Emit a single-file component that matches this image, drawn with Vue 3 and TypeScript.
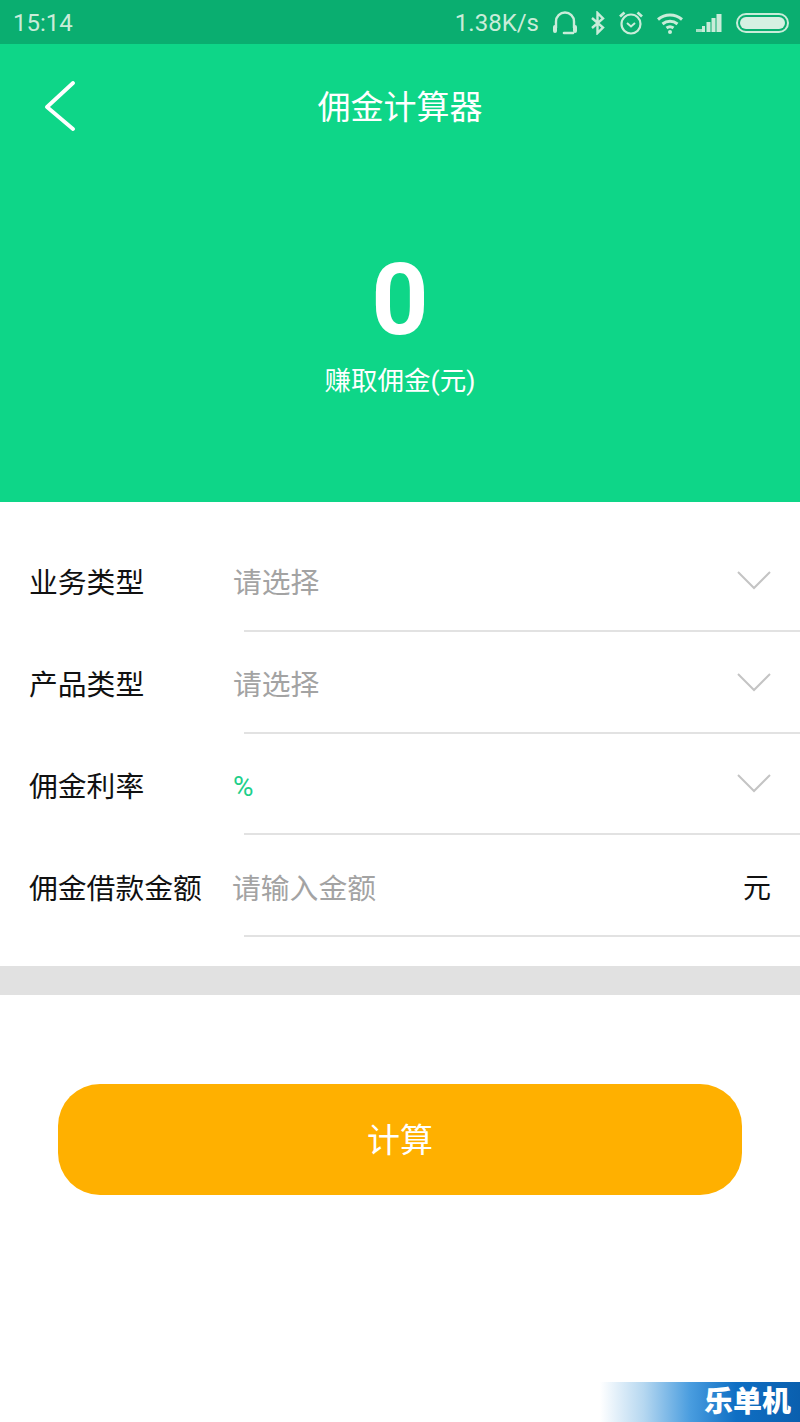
<script setup lang="ts">
interface FormRow {
  label: string
  value: string
  kind: 'select' | 'percent' | 'input'
}

const rows: FormRow[] = [
  { label: '业务类型', value: '请选择', kind: 'select' },
  { label: '产品类型', value: '请选择', kind: 'select' },
  { label: '佣金利率', value: '%', kind: 'percent' },
  { label: '佣金借款金额', value: '请输入金额', kind: 'input' },
]
</script>

<template>
  <div class="page">
    <div class="status-bar">
      <span class="clock">15:14</span>
      <div class="status-right">
        <span class="speed">1.38K/s</span>
        <svg class="ic-headset" width="26" height="24" viewBox="0 0 26 24" fill="none" stroke="#c9ecd9" stroke-width="2.4">
          <path d="M4 17V10.500a9 9 0 0 1 18 0V17" />
          <path d="M3 16v4M23 16v4" stroke-linecap="round" stroke-width="4" />
          <path d="M12 22h9" stroke-linecap="round" stroke-width="2.600" />
        </svg>
        <svg class="ic-bt" width="16" height="24" viewBox="0 0 16 24" fill="none" stroke="#c9ecd9" stroke-width="2.400">
          <path d="M2 7l11 9.500L7.500 22V2L13 7.500 2 17" />
        </svg>
        <svg class="ic-alarm" width="26" height="26" viewBox="0 0 26 26" fill="none" stroke="#c9ecd9" stroke-width="2.200">
          <circle cx="13" cy="14" r="9.500" />
          <path d="M9 13l4 3.500 4-3.500" stroke-width="2" />
          <path d="M2 6.500L6.500 2.500M24 6.500L19.500 2.500" stroke-width="2.800" />
        </svg>
        <svg class="ic-wifi" width="28" height="22" viewBox="0 0 28 22" fill="none" stroke="#c9ecd9" stroke-width="3">
          <path d="M2 7.500c7-6 17-6 24 0" />
          <path d="M6.500 12c4.500-3.800 10.500-3.800 15 0" />
          <path d="M10.500 16c2-1.500 5-1.500 7 0" />
          <circle cx="14" cy="20" r="2" fill="#c9ecd9" stroke="none" />
        </svg>
        <svg class="ic-signal" width="28" height="20" viewBox="0 0 28 20" fill="#c9ecd9">
          <rect x="0" y="16" width="9" height="3" opacity="0.8" />
          <rect x="6" y="13" width="3" height="6" />
          <rect x="10.500" y="9" width="4" height="10" />
          <rect x="15.500" y="5" width="4" height="14" />
          <rect x="20.500" y="1" width="5" height="18" />
        </svg>
        <div class="battery"><div class="battery-fill"></div></div>
      </div>
    </div>

    <header class="hero">
      <div class="nav">
        <svg class="back" width="34" height="52" viewBox="0 0 34 52" fill="none" stroke="#fff" stroke-width="3.800" stroke-linecap="round" stroke-linejoin="round">
          <path d="M31 2L5 26l26 22" />
        </svg>
        <h1 class="title">佣金计算器</h1>
      </div>
      <div class="amount">0</div>
      <div class="amount-label">赚取佣金(元)</div>
    </header>

    <section class="form">
      <div v-for="row in rows" :key="row.label" class="row">
        <span class="label">{{ row.label }}</span>
        <span class="value" :class="`value-${row.kind}`">{{ row.value }}</span>
        <span v-if="row.kind === 'input'" class="unit">元</span>
        <svg v-else class="chevron" width="36" height="20" viewBox="0 0 36 20" fill="none" stroke="#c4c4c4" stroke-width="2">
          <path d="M2 1l16 16L34 1" />
        </svg>
      </div>
    </section>

    <div class="divider"></div>

    <div class="action">
      <button class="calc-btn" type="button">计算</button>
    </div>

    <div class="watermark"><span>乐单机</span></div>
  </div>
</template>

<style scoped>
.page {
  position: relative;
  width: 800px;
  height: 1422px;
  overflow: hidden;
  background: #fff;
  font-family: 'Roboto', 'Noto Sans CJK SC', sans-serif;
}
.status-bar {
  height: 44px;
  background: #0aae70;
  color: #c9ecd9;
  display: flex;
  align-items: center;
  justify-content: space-between;
  padding: 2px 11px 0 13px;
  box-sizing: border-box;
}
.clock {
  font-size: 24px;
}
.speed {
  font-size: 24px;
  margin-right: 1px;
}
.status-right {
  display: flex;
  align-items: center;
  gap: 12px;
}
.battery {
  width: 53px;
  height: 20px;
  border: 2px solid #c9ecd9;
  border-radius: 10px;
  box-sizing: border-box;
  padding: 2px;
}
.battery-fill {
  height: 100%;
  background: #d6f0e2;
  border-radius: 6px;
}
.hero {
  height: 458px;
  background: #0ed688;
  color: #fff;
  display: flex;
  flex-direction: column;
  align-items: center;
}
.nav {
  position: relative;
  width: 100%;
  height: 126px;
  display: flex;
  justify-content: center;
  padding-top: 40px;
  box-sizing: border-box;
}
.back {
  position: absolute;
  left: 42px;
  top: 37px;
}
.title {
  margin: 0;
  font-size: 33px;
  font-weight: 400;
  line-height: 48px;
}
.amount {
  margin-top: 72px;
  font-size: 100px;
  font-weight: 700;
  line-height: 116px;
}
.amount-label {
  margin-top: 3px;
  font-size: 26.500px;
  line-height: 40px;
}
.form {
  padding-top: 28px;
  height: 464px;
  box-sizing: border-box;
}
.row {
  position: relative;
  height: 101.800px;
  display: flex;
  align-items: center;
  padding: 0 29px;
  box-sizing: border-box;
}
.row::after {
  content: '';
  position: absolute;
  left: 244px;
  right: 0;
  bottom: 0;
  height: 2px;
  background: #e2e2e2;
}
.label {
  width: 204px;
  flex: none;
  font-size: 28.800px;
  color: #111;
  white-space: nowrap;
}
.value {
  flex: 1;
  font-size: 28.800px;
  color: #a3a3a3;
}
.value-percent {
  color: #1dcf8a;
  font-size: 28px;
  padding-top: 4px;
}
.value-input {
  margin-left: -1px;
}
.unit {
  font-size: 28px;
  color: #111;
}
.chevron {
  margin-right: -1px;
}
.divider {
  height: 29px;
  background: #e1e1e1;
}
.action {
  padding: 89px 58px 0;
}
.calc-btn {
  display: block;
  width: 100%;
  height: 111px;
  border: 0;
  border-radius: 42px;
  background: #ffb000;
  color: #fff;
  font-family: inherit;
  font-size: 33px;
  padding: 0 0 4px;
}
.watermark {
  position: absolute;
  right: 0;
  bottom: 0;
  width: 200px;
  height: 40px;
  background: linear-gradient(90deg, #ffffff 0%, #b5d7f0 22%, #4a9ddf 45%, #0f6fc4 68%, #0a5fae 100%);
  display: flex;
  align-items: center;
  justify-content: flex-end;
  padding-right: 9px;
  box-sizing: border-box;
}
.watermark span {
  color: #fff;
  font-size: 29px;
  font-weight: 900;
  line-height: 40px;
}
</style>
